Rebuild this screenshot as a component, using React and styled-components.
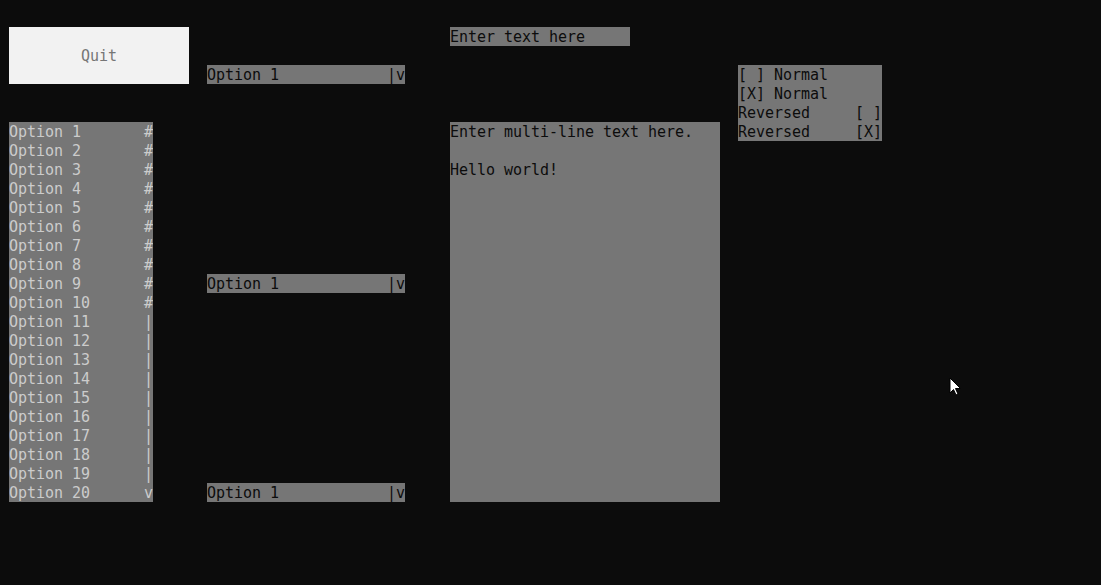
import React from 'react';
import styled, { createGlobalStyle } from 'styled-components';

const CELL_W = 9;
const CELL_H = 19;

const GlobalStyle = createGlobalStyle`
  html, body {
    margin: 0;
    padding: 0;
    background: #0c0c0c;
    overflow: hidden;
  }
`;

const Screen = styled.div`
  position: relative;
  width: 1101px;
  height: 585px;
  box-sizing: border-box;
  padding: 8px 0 0 9px;
  background: #0c0c0c;
  font-family: 'DejaVu Sans Mono', 'Liberation Mono', monospace;
  font-size: 15px;
  letter-spacing: -0.03px;
  line-height: ${CELL_H}px;
  color: #cccccc;
`;

const Cells = styled.div`
  display: grid;
  grid-template-columns: repeat(120, ${CELL_W}px);
  grid-template-rows: repeat(29, ${CELL_H}px);
`;

const Widget = styled.div`
  grid-column: ${(p) => p.$col + 1} / span ${(p) => p.$w};
  grid-row: ${(p) => p.$row + 1} / span ${(p) => p.$h || 1};
  box-sizing: border-box;
  padding-top: 1px;
  background: ${(p) => p.$bg || '#767676'};
  color: ${(p) => p.$fg || '#0c0c0c'};
  white-space: pre;
  overflow: hidden;
`;

const QuitButton = styled(Widget)`
  display: flex;
  align-items: center;
  justify-content: center;
  background: #f2f2f2;
  color: #767676;
`;

const Line = styled.div`
  height: ${CELL_H}px;
  display: flex;
  justify-content: space-between;
`;

const Cursor = styled.svg`
  position: absolute;
  left: 949px;
  top: 377px;
`;

const pad = (s, n) => s + ' '.repeat(Math.max(0, n - s.length));

const Dropdown = ({ row }) => (
  <Widget $col={22} $w={22} $row={row}>
    {pad('Option 1', 20)}|v
  </Widget>
);

const options = Array.from({ length: 20 }, (_, i) => ({
  label: `Option ${i + 1}`,
  bar: i < 10 ? '#' : i < 19 ? '|' : 'v',
}));

const checks = [
  { left: '[ ] Normal', right: '' },
  { left: '[X] Normal', right: '' },
  { left: 'Reversed', right: '[ ]' },
  { left: 'Reversed', right: '[X]' },
];

export default function App() {
  return (
    <>
      <GlobalStyle />
      <Screen>
        <Cells>
          <QuitButton $col={0} $w={20} $row={1} $h={3}>
            Quit
          </QuitButton>

          <Widget $col={49} $w={20} $row={1}>
            Enter text here
          </Widget>

          <Dropdown row={3} />

          <Widget $col={81} $w={16} $row={3} $h={4}>
            {checks.map((c, i) => (
              <Line key={i}>
                <span>{c.left}</span>
                <span>{c.right}</span>
              </Line>
            ))}
          </Widget>

          <Widget $col={0} $w={16} $row={6} $h={20} $fg="#cccccc">
            {options.map((o) => (
              <Line key={o.label}>
                <span>{o.label}</span>
                <span>{o.bar}</span>
              </Line>
            ))}
          </Widget>

          <Widget $col={49} $w={30} $row={6} $h={20}>
            {'Enter multi-line text here.\n\nHello world!'}
          </Widget>

          <Dropdown row={14} />
          <Dropdown row={25} />
        </Cells>

        <Cursor width="13" height="20" viewBox="0 0 13 20">
          <path
            d="M1 1 L1 16 L4.5 12.5 L7 18 L9 17 L6.5 11.5 L11.5 11.5 Z"
            fill="#ffffff"
            stroke="#000000"
            strokeWidth="1"
          />
        </Cursor>
      </Screen>
    </>
  );
}
